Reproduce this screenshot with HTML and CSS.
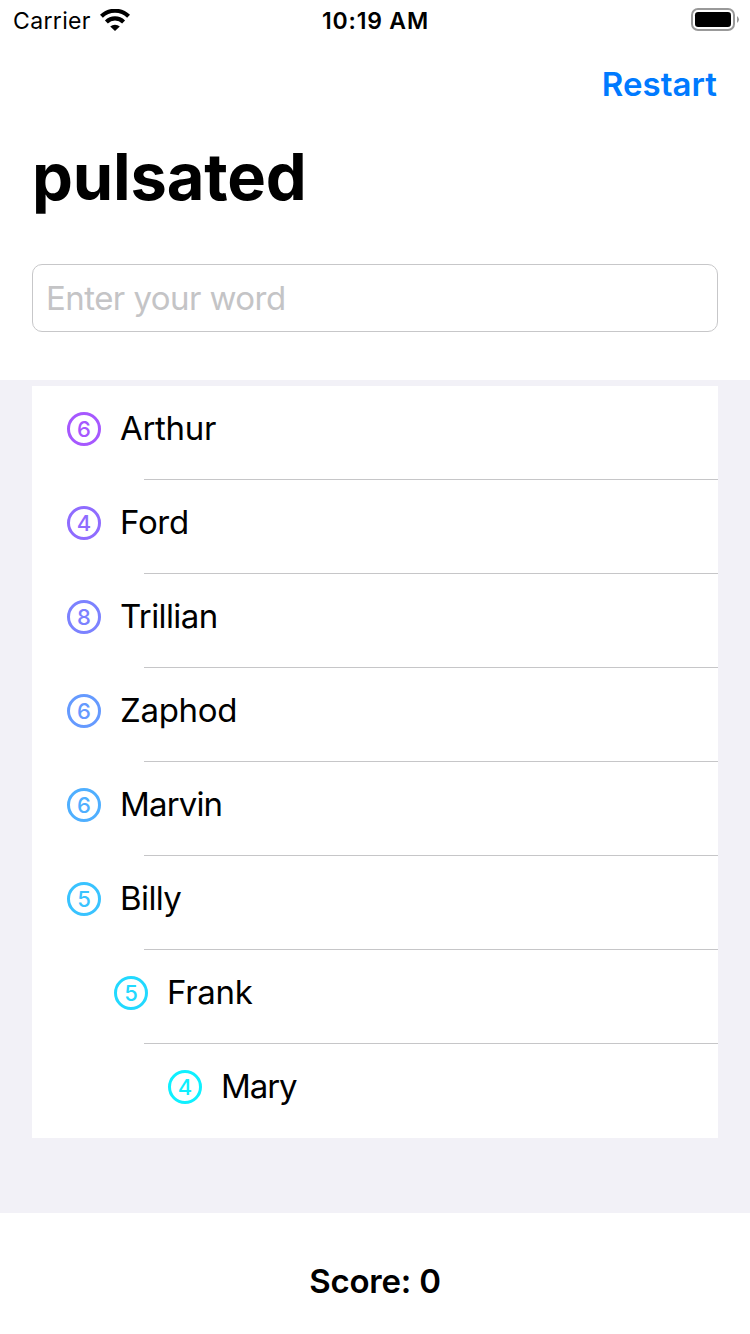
FILE: index.html
```html
<!DOCTYPE html>
<html lang="en">
<head>
<meta charset="utf-8">
<title>pulsated</title>
<link rel="stylesheet" href="styles.css">
</head>
<body>
<main class="screen">
  <div class="status">
    <div class="carrier"><span class="carrier-name">Carrier</span>
      <svg class="wifi" width="30" height="22" viewBox="0 0 30 22"><g fill="none" stroke="#000"><path d="M1.4 7.3A19.5 19.5 0 0 1 28.6 7.3" stroke-width="4.2"/><path d="M6.4 12.9A12.4 12.4 0 0 1 23.6 12.9" stroke-width="4.2"/></g><path d="M10.2 17.6A7 7 0 0 1 19.8 17.6L15 22Z"/></svg>
    </div>
    <span class="time">10:19 AM</span>
    <svg class="battery" width="50" height="24" viewBox="0 0 50 24"><rect x="2" y="2" width="42" height="21" rx="6" fill="none" stroke="#999" stroke-width="2"/><rect x="5" y="5" width="36" height="15" rx="3.2"/><path d="M47 9Q51 12.5 47 16Z" fill="#999"/></svg>
  </div>
  <nav class="nav"><a class="restart">Restart</a></nav>
  <h1 class="title">pulsated</h1>
  <div class="field"><span class="placeholder">Enter your word</span></div>
  <section class="list-area">
    <ul class="list">
      <li class="row purple"><span class="badge">6</span><span class="word">Arthur</span></li>
      <li class="row violet"><span class="badge">4</span><span class="word">Ford</span></li>
      <li class="row indigo"><span class="badge">8</span><span class="word snug">Trillian</span></li>
      <li class="row blue"><span class="badge">6</span><span class="word">Zaphod</span></li>
      <li class="row azure"><span class="badge">6</span><span class="word tight">Marvin</span></li>
      <li class="row sky"><span class="badge">5</span><span class="word snug">Billy</span></li>
      <li class="row aqua"><span class="badge">5</span><span class="word">Frank</span></li>
      <li class="row cyan"><span class="badge">4</span><span class="word tighter">Mary</span></li>
    </ul>
  </section>
  <footer class="footer"><span class="score">Score: 0</span></footer>
</main>
</body>
</html>
```

FILE: styles.css
```css
* { box-sizing: border-box; }
body { margin: 0; background: #fff; font-family: Inter, "Liberation Sans", sans-serif; color: #000; }
.screen { width: 750px; height: 1334px; display: flex; flex-direction: column; overflow: hidden; }
.status { height: 40px; display: grid; grid-template-columns: 1fr auto 1fr; align-items: center; padding: 0 10px 0 13px; font-size: 23px; line-height: 42px; }
.carrier { display: flex; align-items: center; gap: 9px; }
.carrier-name { letter-spacing: .35px; }
.time { font-weight: 600; letter-spacing: .8px; margin-right: 2px; }
.battery { justify-self: end; margin-bottom: 4px; }
.wifi { margin-bottom: 3px; }
.nav { height: 88px; padding: 0 33px; display: flex; align-items: center; justify-content: flex-end; }
.restart { font-size: 33px; font-weight: 600; color: #007aff; letter-spacing: .05px; }
.title { margin: 0; height: 136px; padding: 9px 32px 0; font-size: 65px; line-height: 80px; font-weight: 700; letter-spacing: -.2px; }
.field { height: 68px; margin: 0 32px 48px; border: 1px solid #c7c7c9; border-radius: 10px; padding: 0 13px; display: flex; align-items: center; }
.placeholder { font-size: 33px; color: #c4c4c6; letter-spacing: -.56px; }
.list-area { height: 833px; background: #f2f1f7; padding: 6px 32px; }
.list { list-style: none; margin: 0; padding: 0; background: #fff; }
.row { height: 94px; display: flex; align-items: center; gap: 19px; padding: 0 35px 8px; background: linear-gradient(#c6c6c8, #c6c6c8) 112px 93px / 574px 1px no-repeat; }
.row:last-child { background: none; }
.badge { width: 34px; height: 34px; border: 3px solid; border-radius: 50%; font-size: 22px; line-height: 28px; font-weight: 500; text-align: center; }
.word { font-size: 33px; line-height: 40px; padding-bottom: 2px; color: #000; letter-spacing: -.3px; }
.snug { letter-spacing: -.6px; }
.tight { letter-spacing: -.85px; }
.tighter { letter-spacing: -1.1px; }
.purple { color: #a658ff; }
.violet { color: #8f6cff; }
.indigo { color: #7c82ff; }
.blue { color: #659aff; }
.azure { color: #4fafff; }
.sky { color: #39c3ff; }
.aqua { color: #22d9ff; padding-left: 82px; }
.cyan { color: #0ff0ff; padding-left: 136px; }
.footer { height: 121px; display: flex; justify-content: center; padding-top: 48px; }
.score { font-size: 33px; line-height: 40px; font-weight: 600; letter-spacing: -.2px; }
```
